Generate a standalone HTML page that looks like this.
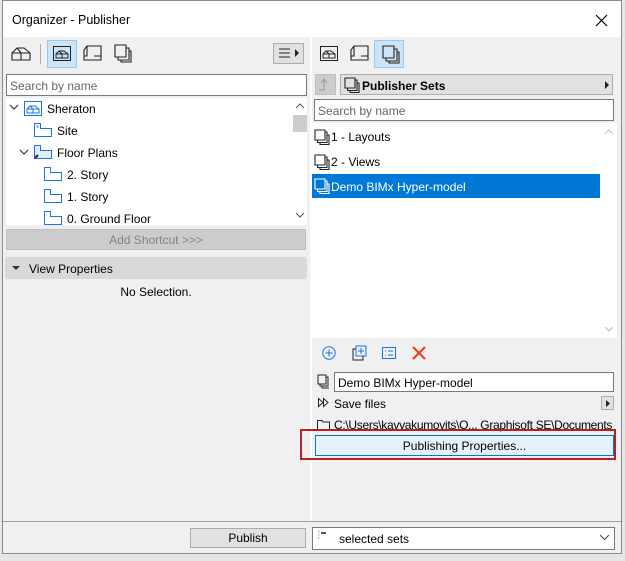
<!DOCTYPE html><html><head><style>
*{box-sizing:border-box;margin:0;padding:0}
body{width:625px;height:561px;background:#e6e6e6;font-family:"Liberation Sans",sans-serif;font-size:12px;color:#000;position:relative;overflow:hidden}
.a{position:absolute}
.win{left:2px;top:0;width:620px;height:554px;background:#f0f0f0;border:1px solid #8a8a8a}
.t{white-space:nowrap}
.inp{background:#fff;border:1px solid #7a7a7a}
.ph{color:#666}
svg{position:absolute;overflow:visible}
</style></head><body>
<div class="a win"></div>
<div class="a" style="left:3px;top:1px;width:618px;height:36px;background:#fff"></div>
<div class="a t" style="left:12px;top:13px;font-size:12.5px">Organizer - Publisher</div>
<svg style="left:596px;top:15px" width="11" height="11"><path d="M0 0L11 11M11 0L0 11" stroke="#000" stroke-width="1.2"/></svg>

<svg style="left:11px;top:45px" width="20" height="16"><path d="M1 15V8L6 3H13L19 8V15ZM1 8H19M6 3L10 8V15" fill="none" stroke="#222" stroke-width="1.1"/></svg>
<div class="a" style="left:40px;top:44px;width:1px;height:20px;background:#aaa"></div>
<div class="a" style="left:47px;top:40px;width:30px;height:28px;background:#cce4f7;border:1px solid #99c9ef"></div>
<svg style="left:53px;top:46px" width="18" height="15"><rect x="0.5" y="0.5" width="17" height="14" fill="none" stroke="#222"/><path d="M3 12V8L6 5H11L15 8V12ZM3 8H15M6 5L9 8V12" fill="none" stroke="#222"/></svg>
<svg style="left:83px;top:45px" width="19" height="16"><path d="M4 1H18V15H1V5ZM4 1V11H1M11 11H18" fill="none" stroke="#222" stroke-width="1.1"/></svg>
<svg style="left:114px;top:43px" width="18" height="20"><path d="M1 2H12V14H1ZM4 14V17H15V5H12M7 17V19H17V8H15" fill="none" stroke="#222" stroke-width="1.1"/></svg>
<div class="a" style="left:273px;top:43px;width:31px;height:21px;background:#e1e1e1;border:1px solid #adadad"></div>
<svg style="left:279px;top:48px" width="22" height="11"><path d="M0 1H11M0 5H11M0 9H11" stroke="#222"/><path d="M16 1L20 5L16 9Z" fill="#222"/></svg>

<div class="a inp" style="left:6px;top:74px;width:301px;height:22px"></div>
<div class="a t ph" style="left:10px;top:79px">Search by name</div>

<div class="a" style="left:6px;top:98px;width:301px;height:127px;background:#fff"></div>
<div class="a" style="left:293px;top:115px;width:14px;height:17px;background:#cdcdcd"></div>
<svg style="left:296px;top:104px" width="8" height="5"><path d="M0 4L4 0L8 4" fill="none" stroke="#555"/></svg>
<svg style="left:296px;top:213px" width="8" height="5"><path d="M0 0L4 4L8 0" fill="none" stroke="#555"/></svg>

<svg style="left:10px;top:105px" width="8" height="5"><path d="M0 0L4 4L8 0" fill="none" stroke="#333" stroke-width="1.2"/></svg>
<svg style="left:24px;top:101px" width="18" height="15"><rect x="0.5" y="0.5" width="17" height="14" fill="none" stroke="#1a73e8"/><path d="M3 12V8L6 5H11L15 8V12ZM3 8H15M6 5L9 8V12" fill="none" stroke="#1a73e8"/></svg>
<div class="a t" style="left:47px;top:102px">Sheraton</div>
<svg style="left:34px;top:123px" width="18" height="14"><path d="M0.5 0.5H6.5V5.5H17.5V13.5H0.5Z" fill="none" stroke="#1a73e8"/><path d="M3 2V4H5" fill="none" stroke="#1a73e8" stroke-width=".8"/></svg>
<div class="a t" style="left:57px;top:124px">Site</div>
<svg style="left:20px;top:150px" width="8" height="5"><path d="M0 0L4 4L8 0" fill="none" stroke="#333" stroke-width="1.2"/></svg>
<svg style="left:34px;top:145px" width="18" height="14"><path d="M0.5 0.5H6.5V5.5H17.5V13.5H0.5Z" fill="#e3eefb" stroke="#1a73e8"/><path d="M1 13L4 10" stroke="#222" stroke-width="2"/></svg>
<div class="a t" style="left:57px;top:146px">Floor Plans</div>
<svg style="left:44px;top:167px" width="18" height="14"><path d="M0.5 0.5H6.5V5.5H17.5V13.5H0.5Z" fill="none" stroke="#1a73e8"/></svg>
<div class="a t" style="left:67px;top:168px">2. Story</div>
<svg style="left:44px;top:189px" width="18" height="14"><path d="M0.5 0.5H6.5V5.5H17.5V13.5H0.5Z" fill="none" stroke="#1a73e8"/></svg>
<div class="a t" style="left:67px;top:190px">1. Story</div>
<svg style="left:44px;top:211px" width="18" height="14"><path d="M0.5 0.5H6.5V5.5H17.5V13.5H0.5Z" fill="none" stroke="#1a73e8"/></svg>
<div class="a t" style="left:67px;top:212px">0. Ground Floor</div>
<div class="a" style="left:6px;top:225px;width:301px;height:1px;background:#f0f0f0"></div>

<div class="a" style="left:6px;top:229px;width:300px;height:21px;background:#cccccc;border:1px solid #bfbfbf"></div>
<div class="a t" style="left:6px;top:233px;width:300px;text-align:center;color:#838383">Add Shortcut &gt;&gt;&gt;</div>
<div class="a" style="left:5px;top:257px;width:302px;height:22px;background:#d9d9d9;border-radius:3px"></div>
<svg style="left:12px;top:266px" width="8" height="5"><path d="M0 0H8L4 4Z" fill="#333"/></svg>
<div class="a t" style="left:29px;top:262px">View Properties</div>
<div class="a t" style="left:0;top:285px;width:312px;text-align:center">No Selection.</div>

<div class="a" style="left:310px;top:37px;width:2px;height:484px;background:#fff"></div>

<svg style="left:320px;top:46px" width="18" height="15"><rect x="0.5" y="0.5" width="17" height="14" fill="none" stroke="#222"/><path d="M3 12V8L6 5H11L15 8V12ZM3 8H15M6 5L9 8V12" fill="none" stroke="#222"/></svg>
<svg style="left:350px;top:45px" width="19" height="16"><path d="M4 1H18V15H1V5ZM4 1V11H1M11 11H18" fill="none" stroke="#222" stroke-width="1.1"/></svg>
<div class="a" style="left:374px;top:40px;width:30px;height:28px;background:#cce4f7;border:1px solid #99c9ef"></div>
<svg style="left:382px;top:44px" width="18" height="20"><path d="M1 2H12V14H1ZM4 14V17H15V5H12M7 17V19H17V8H15" fill="none" stroke="#222" stroke-width="1.1"/></svg>

<div class="a" style="left:315px;top:74px;width:21px;height:21px;background:#cccccc;border:1px solid #bfbfbf"></div>
<svg style="left:319px;top:78px" width="13" height="13"><path d="M0 12H5V2M2 5L5 1L8 5" fill="none" stroke="#999"/></svg>
<div class="a" style="left:340px;top:74px;width:273px;height:21px;background:#e1e1e1;border:1px solid #adadad"></div>
<svg style="left:344px;top:76px" width="16" height="18"><path d="M1 2H11V12H1ZM3.5 12V14.5H13V4H11M6 14.5V16.5H15V7H13" fill="none" stroke="#222" stroke-width="1.1"/></svg>
<div class="a t" style="left:362px;top:79px;font-weight:bold">Publisher Sets</div>
<svg style="left:605px;top:81px" width="5" height="8"><path d="M0 0L4 4L0 8Z" fill="#222"/></svg>

<div class="a inp" style="left:314px;top:99px;width:300px;height:22px"></div>
<div class="a t ph" style="left:318px;top:104px">Search by name</div>

<div class="a" style="left:312px;top:123px;width:305px;height:215px;background:#fff"></div>
<svg style="left:605px;top:130px" width="8" height="5"><path d="M0 4L4 0L8 4" fill="none" stroke="#bbb"/></svg>
<svg style="left:605px;top:327px" width="8" height="5"><path d="M0 0L4 4L8 0" fill="none" stroke="#bbb"/></svg>
<svg style="left:314px;top:128px" width="16" height="18"><path d="M1 2H11V12H1ZM3.5 12V14.5H13V4H11M6 14.5V16.5H15V7H13" fill="none" stroke="#222" stroke-width="1.1"/></svg>
<div class="a t" style="left:331px;top:130px">1 - Layouts</div>
<svg style="left:314px;top:153px" width="16" height="18"><path d="M1 2H11V12H1ZM3.5 12V14.5H13V4H11M6 14.5V16.5H15V7H13" fill="none" stroke="#222" stroke-width="1.1"/></svg>
<div class="a t" style="left:331px;top:155px">2 - Views</div>
<div class="a" style="left:312px;top:174px;width:288px;height:24px;background:#0078d7"></div>
<svg style="left:314px;top:177px" width="16" height="18"><path d="M1 2H11V12H1ZM3.5 12V14.5H13V4H11M6 14.5V16.5H15V7H13" fill="none" stroke="#fff" stroke-width="1.1"/></svg>
<div class="a t" style="left:331px;top:180px;color:#fff">Demo BIMx Hyper-model</div>

<svg style="left:322px;top:346px" width="14" height="14"><circle cx="7" cy="7" r="6.2" fill="none" stroke="#1a73e8"/><path d="M7 3.5V10.5M3.5 7H10.5" stroke="#1a73e8"/></svg>
<svg style="left:352px;top:345px" width="15" height="16"><path d="M4 1H14V11H4Z" fill="none" stroke="#1a73e8"/><path d="M9 3V9M6 6H12" stroke="#1a73e8"/><path d="M4 4H1V15H11V11" fill="none" stroke="#222"/></svg>
<svg style="left:382px;top:347px" width="14" height="12"><rect x="0.5" y="0.5" width="13" height="11" fill="none" stroke="#1a73e8"/><path d="M3 4H4M6 4H11M3 8H4M6 8H11" stroke="#1a73e8"/></svg>
<svg style="left:412px;top:346px" width="14" height="14"><path d="M1 1L13 13M13 1L1 13" stroke="#f03a17" stroke-width="2"/></svg>

<svg style="left:317px;top:374px" width="13" height="15"><path d="M1 1H9V10H1ZM3 10V12H11V3H9M5 12V14H12" fill="none" stroke="#222"/></svg>
<div class="a inp" style="left:334px;top:372px;width:280px;height:20px"></div>
<div class="a t" style="left:338px;top:376px">Demo BIMx Hyper-model</div>
<svg style="left:318px;top:398px" width="12" height="9"><path d="M0.5 0.5L5 4.5L0.5 8.5ZM5.5 0.5L10 4.5L5.5 8.5Z" fill="none" stroke="#222"/></svg>
<div class="a t" style="left:334px;top:397px">Save files</div>
<div class="a" style="left:601px;top:396px;width:13px;height:14px;background:#e1e1e1;border:1px solid #adadad"></div>
<svg style="left:606px;top:400px" width="4" height="7"><path d="M0 0L4 3.5L0 7Z" fill="#222"/></svg>
<svg style="left:317px;top:419px" width="13" height="11"><path d="M0.5 1.5H5L6 3H12.5V10.5H0.5Z" fill="none" stroke="#222"/></svg>
<div class="a t" style="left:334px;top:418px;letter-spacing:-0.3px">C:\Users\kavvakumovits\O... Graphisoft SE\Documents</div>
<div class="a" style="left:300px;top:429px;width:316px;height:31px;border:2px solid #b22222"></div>
<div class="a" style="left:315px;top:435px;width:299px;height:21px;background:#e5f1fb;border:1px solid #0078d7"></div>
<div class="a t" style="left:315px;top:439px;width:299px;text-align:center">Publishing Properties...</div>

<div class="a" style="left:3px;top:521px;width:618px;height:1px;background:#a0a0a0"></div>
<div class="a" style="left:190px;top:528px;width:116px;height:20px;background:#e1e1e1;border:1px solid #adadad"></div>
<div class="a t" style="left:190px;top:531px;width:116px;text-align:center">Publish</div>
<div class="a inp" style="left:312px;top:527px;width:303px;height:23px"></div>
<svg style="left:318px;top:531px" width="10" height="10"><path d="M1 0V9" stroke="#999" stroke-dasharray="1.5 1.5"/><path d="M3 2H8" stroke="#222" stroke-width="1.5"/></svg>
<div class="a t" style="left:339px;top:532px">selected sets</div>
<svg style="left:600px;top:535px" width="9" height="5"><path d="M0 0L4.5 4.5L9 0" fill="none" stroke="#444"/></svg>
</body></html>
